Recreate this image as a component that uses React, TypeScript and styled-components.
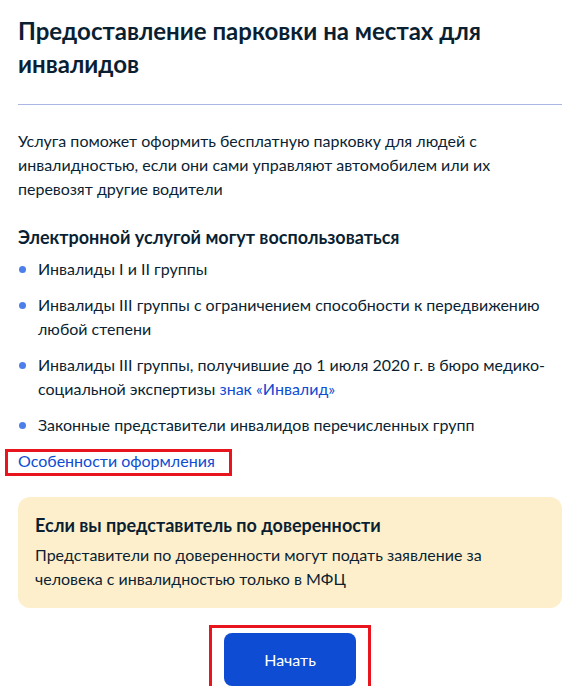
import React from "react";
import styled, { createGlobalStyle } from "styled-components";

const GlobalStyle = createGlobalStyle`
  body {
    margin: 0;
    background: #ffffff;
    font-family: Lato, "Noto Sans", sans-serif;
    color: #0b1f33;
  }
`;

const Page = styled.main`
  width: 544px;
  margin-left: 18px;
  padding-top: 14px;
`;

const Title = styled.h1`
  margin: 0;
  font-size: 24px;
  line-height: 33px;
  font-weight: 700;
  color: #0b1f33;
`;

const Divider = styled.hr`
  margin: 24px 0 0;
  border: 0;
  border-top: 1px solid #a9b6e6;
`;

const Lead = styled.p`
  margin: 24px 0 0;
  font-size: 16px;
  line-height: 24px;
  padding-right: 60px;
`;

const SubTitle = styled.h2`
  margin: 24px 0 0;
  font-size: 18px;
  line-height: 24px;
  font-weight: 700;
`;

const List = styled.ul`
  margin: 8px 0 0;
  padding: 0;
  list-style: none;
  display: flex;
  flex-direction: column;
  gap: 12px;
`;

const Item = styled.li`
  position: relative;
  padding-left: 20px;
  font-size: 16px;
  line-height: 24px;

  &::before {
    content: "";
    position: absolute;
    left: 1px;
    top: 8.5px;
    width: 7px;
    height: 7px;
    border-radius: 50%;
    background: #4d7fea;
  }
`;

const Link = styled.a<{ $marked?: boolean }>`
  position: relative;
  color: #0d4cd3;
  text-decoration: none;
  cursor: pointer;

  ${({ $marked }) =>
    $marked &&
    `
    &::after {
      content: "";
      position: absolute;
      top: -2px;
      bottom: -6px;
      left: -13px;
      right: -17px;
      border: 3px solid #e8141e;
      pointer-events: none;
    }
  `}
`;

const LinkRow = styled.div`
  margin-top: 12px;
  font-size: 16px;
  line-height: 24px;
`;

const Notice = styled.section`
  margin-top: 24px;
  padding: 16px 17px 17px;
  border-radius: 12px;
  background: #feefcc;
`;

const NoticeTitle = styled.h3`
  margin: 0;
  font-size: 18px;
  line-height: 24px;
  font-weight: 700;
`;

const NoticeText = styled.p`
  margin: 6px 0 0;
  font-size: 16px;
  line-height: 24px;
`;

const Actions = styled.div`
  display: flex;
  justify-content: center;
  margin-top: 25px;
`;

const Button = styled.button`
  position: relative;
  height: 53px;
  padding: 0 40px;
  border: 0;
  border-radius: 8px;
  background: #0d4cd3;
  color: #ffffff;
  font-family: Lato, "Noto Sans", sans-serif;
  font-size: 16px;
  cursor: pointer;

  &::after {
    content: "";
    position: absolute;
    inset: -8px -15px;
    border: 3px solid #e8141e;
    pointer-events: none;
  }
`;

const groups = [
  "Инвалиды I и II группы",
  "Инвалиды III группы с ограничением способности к передвижению любой степени",
];

export default function App() {
  return (
    <>
      <GlobalStyle />
      <Page>
        <Title>Предоставление парковки на местах для инвалидов</Title>
        <Divider />
        <Lead>
          Услуга поможет оформить бесплатную парковку для людей с инвалидностью,
          если они сами управляют автомобилем или их перевозят другие водители
        </Lead>

        <SubTitle>Электронной услугой могут воспользоваться</SubTitle>
        <List>
          {groups.map((g) => (
            <Item key={g}>{g}</Item>
          ))}
          <Item>
            Инвалиды III группы, получившие до 1 июля 2020 г. в бюро медико-социальной
            экспертизы <Link>знак «Инвалид»</Link>
          </Item>
          <Item>Законные представители инвалидов перечисленных групп</Item>
        </List>

        <LinkRow>
          <Link $marked>Особенности оформления</Link>
        </LinkRow>

        <Notice>
          <NoticeTitle>Если вы представитель по доверенности</NoticeTitle>
          <NoticeText>
            Представители по доверенности могут подать заявление за человека с
            инвалидностью только в МФЦ
          </NoticeText>
        </Notice>

        <Actions>
          <Button>Начать</Button>
        </Actions>
      </Page>
    </>
  );
}
